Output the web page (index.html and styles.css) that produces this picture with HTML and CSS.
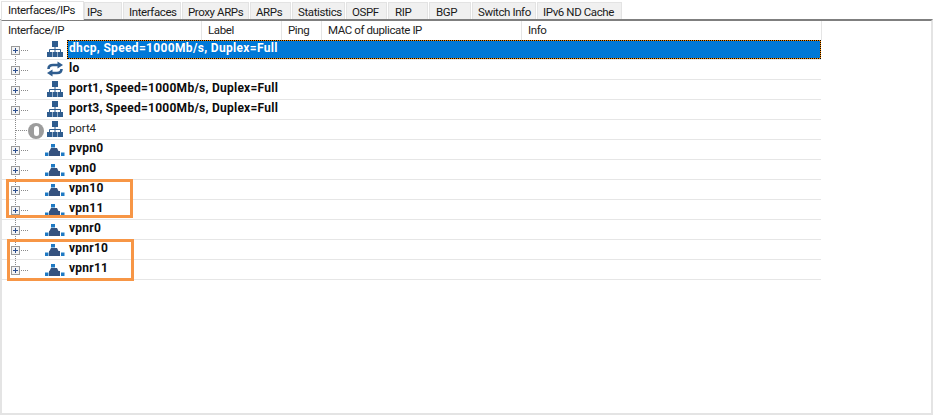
FILE: index.html
```html
<!DOCTYPE html>
<html lang="en">
<head>
<meta charset="utf-8">
<title>Interfaces/IPs</title>
<link rel="stylesheet" href="styles.css">
</head>
<body>
<svg class="defs" width="0" height="0" aria-hidden="true">
  <symbol id="net" viewBox="0 0 16 16">
    <rect x="5" y="0" width="6" height="6" fill="#2f5d8f"/>
    <path d="M8 6v5M2.500 11V8.500h11V11" fill="none" stroke="#2f5d8f" stroke-width="1"/>
    <rect x="0" y="11" width="5" height="5" fill="#2f5d8f"/>
    <rect x="5.500" y="11" width="5" height="5" fill="#2f5d8f"/>
    <rect x="11" y="11" width="5" height="5" fill="#2f5d8f"/>
  </symbol>
  <symbol id="vpn" viewBox="0 0 20 12">
    <rect x="6" y="0" width="4" height="3.500" fill="#1f7ac4"/>
    <path d="M6 4h6l1.500 3H15v5H4V7h0.500z" fill="#34527f"/>
    <rect x="0" y="8.500" width="3.500" height="3.500" fill="#1f7ac4"/>
    <rect x="16" y="8.500" width="3.500" height="3.500" fill="#1f7ac4"/>
  </symbol>
  <symbol id="loop" viewBox="0 0 16 16">
    <path d="M1.500 8C1.500 5 3.500 4 6 4h6" fill="none" stroke="#2f5d8f" stroke-width="2.600"/>
    <path d="M10.500 0.500l5.500 3.500-5.500 3.500z" fill="#2f5d8f"/>
    <path d="M14.500 8c0 3-2 4-4.500 4H4" fill="none" stroke="#2f5d8f" stroke-width="2.600"/>
    <path d="M5.500 8.500L0 12l5.500 3.500z" fill="#2f5d8f"/>
  </symbol>
</svg>
<div class="window">
  <nav class="tabs">
    <span class="tab active">Interfaces/IPs</span>
    <span class="tab w-ips">IPs</span>
    <span class="tab w-ifs">Interfaces</span>
    <span class="tab w-proxy">Proxy ARPs</span>
    <span class="tab w-arps">ARPs</span>
    <span class="tab w-stats">Statistics</span>
    <span class="tab w-ospf">OSPF</span>
    <span class="tab w-rip">RIP</span>
    <span class="tab w-bgp">BGP</span>
    <span class="tab w-switch">Switch Info</span>
    <span class="tab w-nd">IPv6 ND Cache</span>
  </nav>
  <section class="panel">
    <div class="head">
      <span class="col c1">Interface/IP</span>
      <span class="col c2">Label</span>
      <span class="col c3">Ping</span>
      <span class="col c4">MAC of duplicate IP</span>
      <span class="col c5">Info</span>
    </div>
    <div class="tree">
      <div class="row first">
        <span class="exp"></span><span class="dots"></span>
        <svg class="ico"><use href="#net"/></svg>
        <span class="name selected">dhcp, Speed=1000Mb/s, Duplex=Full</span>
      </div>
      <div class="row">
        <span class="exp"></span><span class="dots"></span>
        <svg class="ico"><use href="#loop"/></svg>
        <span class="name">lo</span>
      </div>
      <div class="row">
        <span class="exp"></span><span class="dots"></span>
        <svg class="ico"><use href="#net"/></svg>
        <span class="name">port1, Speed=1000Mb/s, Duplex=Full</span>
      </div>
      <div class="row">
        <span class="exp"></span><span class="dots"></span>
        <svg class="ico"><use href="#net"/></svg>
        <span class="name">port3, Speed=1000Mb/s, Duplex=Full</span>
      </div>
      <div class="row leaf">
        <span class="dots long"></span>
        <span class="warn"></span>
        <svg class="ico near"><use href="#net"/></svg>
        <span class="name plain">port4</span>
      </div>
      <div class="row">
        <span class="exp"></span><span class="dots"></span>
        <svg class="ico vpn"><use href="#vpn"/></svg>
        <span class="name">pvpn0</span>
      </div>
      <div class="row">
        <span class="exp"></span><span class="dots"></span>
        <svg class="ico vpn"><use href="#vpn"/></svg>
        <span class="name">vpn0</span>
      </div>
      <div class="row">
        <span class="exp"></span><span class="dots"></span>
        <svg class="ico vpn"><use href="#vpn"/></svg>
        <span class="name">vpn10</span>
      </div>
      <div class="row">
        <span class="exp"></span><span class="dots"></span>
        <svg class="ico vpn"><use href="#vpn"/></svg>
        <span class="name">vpn11</span>
      </div>
      <div class="row">
        <span class="exp"></span><span class="dots"></span>
        <svg class="ico vpn"><use href="#vpn"/></svg>
        <span class="name">vpnr0</span>
      </div>
      <div class="row">
        <span class="exp"></span><span class="dots"></span>
        <svg class="ico vpn"><use href="#vpn"/></svg>
        <span class="name">vpnr10</span>
      </div>
      <div class="row last">
        <span class="exp"></span><span class="dots"></span>
        <svg class="ico vpn"><use href="#vpn"/></svg>
        <span class="name">vpnr11</span>
      </div>
      <div class="callout box-a"></div>
      <div class="callout box-b"></div>
    </div>
  </section>
</div>
</body>
</html>
```
FILE: styles.css
```css
* { box-sizing: border-box; }
html, body { margin: 0; padding: 0; background: #fff; }
body { width: 934px; height: 416px; overflow: hidden; font-family: Roboto, "Liberation Sans", sans-serif; font-size: 11.500px; letter-spacing: -0.4px; color: #1a1a1a; }
.defs { position: absolute; }
.window { display: flex; flex-direction: column; height: 416px; padding-top: 1px; }
.tabs { display: flex; height: 18px; padding-left: 1px; align-items: flex-end; }
.tab { height: 17px; margin-right: 1px; padding-left: 5px; background: #f0f0f0; border: 1px solid #e3e3e3; border-bottom: 0; line-height: 18px; white-space: nowrap; overflow: hidden; }
.tab.active { width: 83px; height: 19px; margin-right: 0; padding-left: 6px; background: #fff; margin-bottom: -1px; line-height: 17px; position: relative; }
.w-ips { width: 38px; padding-left: 2px; }
.w-ifs { width: 58px; }
.w-proxy { width: 67px; }
.w-arps { width: 41px; }
.w-stats { width: 53px; }
.w-ospf { width: 41px; }
.w-rip { width: 40px; padding-left: 6px; }
.w-bgp { width: 42px; padding-left: 6px; }
.w-switch { width: 64px; }
.w-nd { width: 85px; margin-right: 0; }
.panel { flex: 1; margin-right: 1px; margin-bottom: 1px; border-top: 2px solid #7f7f7f; border-left: 2px solid #e4e4e4; border-right: 2px solid #e4e4e4; border-bottom: 2px solid #e4e4e4; }
.head { display: flex; height: 19px; line-height: 18px; color: #222; }
.col { padding-left: 6px; border-right: 1px solid #e5e5e5; height: 19px; white-space: nowrap; }
.c1 { width: 200px; }
.c2 { width: 80px; }
.c3 { width: 40px; }
.c4 { width: 200px; }
.c5 { width: 300px; }
.tree { position: relative; width: 819px; }
.row { display: flex; align-items: center; height: 20px; border-bottom: 1px solid #e6e6e6; background-image: repeating-linear-gradient(#8a8a8a 0 1px, transparent 1px 2px); background-size: 1px 100%; background-repeat: no-repeat; background-position: 13px 0; }
.row.first { background-size: 1px 10px; background-position: 13px 10px; }
.row.last { background-size: 1px 6px; background-position: 13px 0; }
.exp { flex: none; align-self: flex-start; width: 9px; height: 9px; margin-left: 9px; margin-top: 6px; border: 1px solid #9a9a9a; background: linear-gradient(#2d4f8e, #2d4f8e) center / 5px 1px no-repeat, linear-gradient(#2d4f8e, #2d4f8e) center / 1px 5px no-repeat, #f3f3f3; }
.dots { flex: none; align-self: flex-start; width: 8px; height: 1px; margin-left: 1px; margin-top: 10px; background-image: linear-gradient(90deg, #8a8a8a 50%, transparent 50%); background-size: 2px 1px; }
.dots.long { width: 12px; margin-left: 14px; }
.ico { flex: none; align-self: flex-start; width: 16px; height: 16px; margin-left: 18px; margin-top: 1px; }
.ico.vpn { width: 20px; height: 12px; margin-left: 16px; margin-top: 4px; }
.ico.near { margin-left: 3px; }
.warn { flex: none; align-self: flex-start; position: relative; width: 16px; height: 16px; margin-top: 3px; border-radius: 50%; background: #9c9c9c; }
.warn::before { content: ""; position: absolute; left: 6px; top: 3px; width: 5px; height: 10px; border-radius: 2.500px; background: #fff; }
.name { margin-left: 4px; padding: 0 2px; font-weight: 700; font-size: 12px; letter-spacing: 0.25px; color: #0c0c0c; white-space: nowrap; line-height: 18px; margin-top: -3px; }
.ico.vpn + .name { margin-left: 2px; }
.name.plain { font-weight: 400; font-size: 11.500px; letter-spacing: -0.1px; color: #222; margin-left: 4px; margin-top: -4px; }
.name.selected { flex: 1; margin-left: 4px; margin-top: 0; height: 19px; background: #0078d7; color: #fff; letter-spacing: 0.33px; outline: 1px dotted #000; outline-offset: -1px; border: 1px solid #ff8c00; line-height: 14px; padding: 0 1px; }
.callout { position: absolute; border: 3px solid #f79646; pointer-events: none; }
.box-a { left: 4px; top: 139px; width: 127px; height: 39px; }
.box-b { left: 5px; top: 199px; width: 127px; height: 42px; }
```
